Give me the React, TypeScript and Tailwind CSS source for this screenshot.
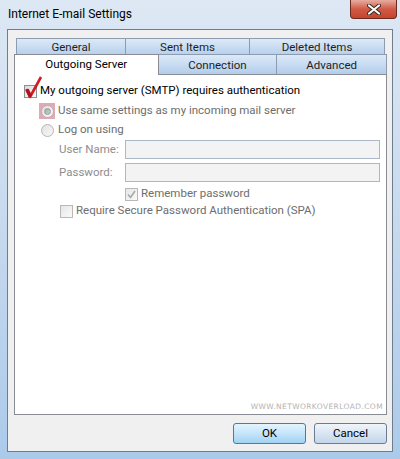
import React from "react";

const font = { fontFamily: 'Roboto, "Noto Sans", Arial, sans-serif' };

const Tab = ({ label, w, cls = "" }: { label: string; w: string; cls?: string }) => (
    <div
        className={`${w} h-full flex items-center justify-center pt-[2px] border border-[#8d9bb0] border-b-0 bg-gradient-to-b from-[#dde9f7] via-[#c8dcf2] to-[#b2cdea] text-[11.5px] text-[#1e1e1e] -ml-px first:ml-0 ${cls}`}
    >
        {label}
    </div>
);

const Radio = ({ checked }: { checked?: boolean }) => (
    <span className="w-[13px] h-[13px] rounded-full border border-[#b5b5b5] bg-gradient-to-br from-[#e2e2e2] to-[#f8f8f8] flex items-center justify-center">
        {checked && <span className="w-[7px] h-[7px] rounded-full bg-gradient-to-br from-[#a7a7a7] to-[#d0d0d0] border border-[#9a9a9a]" />}
    </span>
);

const DisabledCheck = ({ checked }: { checked?: boolean }) => (
    <span className="w-[13px] h-[13px] border border-[#b8b8b8] bg-gradient-to-br from-[#e6e6e6] to-[#fafafa] flex items-center justify-center">
        {checked && (
            <svg width="9" height="9" viewBox="0 0 9 9">
                <path d="M1 4.5 L3.5 7.5 L8 1" stroke="#a8a8a8" strokeWidth="1.6" fill="none" />
            </svg>
        )}
    </span>
);

export default function App() {
    return (
        <div
            className="w-[400px] h-[459px] flex flex-col bg-gradient-to-b from-[#dde8f4] via-[#c6d9ee] to-[#abcaea] overflow-hidden"
            style={font}
        >
            {/* title bar */}
            <div className="h-[29px] flex items-start shrink-0 relative">
                <span className="ml-[8px] mt-[5px] text-[12px] text-black leading-[18px]">Internet E-mail Settings</span>
                <div className="ml-auto mr-[3px] w-[47px] h-[19px] rounded-b-[4px] border border-t-0 border-[#6b2a20] bg-gradient-to-b from-[#e7aca0] via-[#d05a45] to-[#c5452d] flex items-center justify-center">
                    <svg width="14" height="11" viewBox="0 0 14 11">
                        <path d="M2 1.5 L12 9.5 M12 1.5 L2 9.5" stroke="#3b2520" strokeWidth="4" strokeLinecap="round" />
                        <path d="M2 1.5 L12 9.5 M12 1.5 L2 9.5" stroke="#ffffff" strokeWidth="2.2" strokeLinecap="round" />
                    </svg>
                </div>
            </div>

            {/* client area */}
            <div className="mx-[7px] mb-[7px] flex-1 bg-[#f0f0f0] border border-[#6f7d8c] flex flex-col pl-[6px] pr-[5px] pt-[8px] pb-[7px]">
                {/* tabs */}
                <div className="h-[18px] flex mx-[2px]">
                    <Tab label="General" w="w-[110px]" cls="!pt-0" />
                    <Tab label="Sent Items" w="w-[125px]" cls="!pt-0" />
                    <Tab label="Deleted Items" w="w-[136px]" cls="!pt-0" />
                </div>
                <div className="h-[20px] -mt-[2px] flex items-end relative z-10">
                    <div className="w-[145px] h-[21px] -mb-px bg-white border border-[#898c95] border-b-0 flex items-center justify-center text-[11.5px] text-black">
                        Outgoing Server
                    </div>
                    <Tab label="Connection" w="w-[119px]" cls="!ml-0 h-[18px] border-l-0" />
                    <Tab label="Advanced" w="w-[111px]" cls="h-[18px]" />
                </div>

                {/* panel */}
                <div className="h-[341px] bg-white border border-[#898c95] flex flex-col pl-[9px] text-[11.5px]">
                    <div className="mt-[8px] h-[16px] flex items-center">
                        <span className="relative w-[13px] h-[13px] border border-[#8f8f8f] bg-gradient-to-br from-[#dcdcdc] to-[#fbfbfb]">
                            <svg className="absolute -left-[1px] -top-[10px]" width="20" height="24" viewBox="0 0 20 24">
                                <path d="M2.5 13 L6 21 L17 1" stroke="#d21b26" strokeWidth="2.6" fill="none" strokeLinejoin="round" />
                                <path d="M3 13.5 L6.5 20.5" stroke="#b5101b" strokeWidth="3.6" fill="none" />
                            </svg>
                        </span>
                        <span className="ml-[3px] text-black">My outgoing server (SMTP) requires authentication</span>
                    </div>

                    <div className="mt-[4px] h-[16px] flex items-center">
                        <span className="ml-[15px] w-[16px] h-[16px] bg-[#e2a9b4] flex items-center justify-center">
                            <Radio checked />
                        </span>
                        <span className="ml-[3px] text-[#6d6d6d]">Use same settings as my incoming mail server</span>
                    </div>

                    <div className="mt-[3px] h-[16px] flex items-center">
                        <span className="ml-[17px]">
                            <Radio />
                        </span>
                        <span className="ml-[4px] text-[#6d6d6d]">Log on using</span>
                    </div>

                    <div className="mt-[2px] h-[19px] flex items-center">
                        <span className="ml-[35px] w-[66px] text-[#8d8d8d] whitespace-nowrap">User Name:</span>
                        <span className="w-[255px] h-[19px] border border-[#abb8c8] bg-[#f3f3f3]" />
                    </div>

                    <div className="mt-[4px] h-[19px] flex items-center">
                        <span className="ml-[35px] w-[66px] text-[#8d8d8d] whitespace-nowrap">Password:</span>
                        <span className="w-[255px] h-[19px] border border-[#abb8c8] bg-[#f3f3f3]" />
                    </div>

                    <div className="mt-[4px] h-[16px] flex items-center">
                        <span className="ml-[101px]">
                            <DisabledCheck checked />
                        </span>
                        <span className="ml-[3px] text-[#6d6d6d]">Remember password</span>
                    </div>

                    <div className="mt-[1px] h-[16px] flex items-center">
                        <span className="ml-[36px]">
                            <DisabledCheck />
                        </span>
                        <span className="ml-[3px] text-[#6d6d6d]">Require Secure Password Authentication (SPA)</span>
                    </div>

                    <div
                        className="mt-auto mb-[3px] mr-[3px] self-end text-[7.5px] leading-[9px] tracking-[0.4px] text-[#b3b3b3]"
                        style={{ fontFamily: '"DejaVu Sans", sans-serif' }}
                    >
                        WWW.NETWORKOVERLOAD.COM
                    </div>
                </div>

                {/* buttons */}
                <div className="mt-auto flex justify-end gap-[8px]">
                    <button className="w-[73px] h-[21px] rounded-[3px] border border-[#3c7fb1] bg-gradient-to-b from-[#e5f4fd] via-[#c4e5fa] to-[#a2d2f4] text-[11.5px] text-black">
                        OK
                    </button>
                    <button className="w-[73px] h-[21px] rounded-[3px] border border-[#6d7c92] bg-gradient-to-b from-[#f0f5fb] via-[#d9e5f2] to-[#c3d6eb] text-[11.5px] text-black">
                        Cancel
                    </button>
                </div>
            </div>
        </div>
    );
}
